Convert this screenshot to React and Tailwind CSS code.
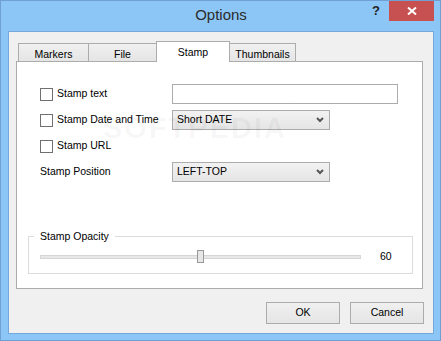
import React from "react";

const tabs = [
  { label: "Markers", w: "w-[71px]" },
  { label: "File", w: "w-[69px]" },
  { label: "Stamp", w: "w-[74px]", active: true },
  { label: "Thumbnails", w: "w-[67px]" },
];

const Checkbox = ({ label }) => (
  <div className="flex items-center w-[132px]">
    <span className="w-[13px] h-[13px] border border-[#707070] bg-white" />
    <span className="ml-[4px]">{label}</span>
  </div>
);

const Chevron = () => (
  <svg width="8" height="6" viewBox="0 0 8 6" className="mr-[5px]">
    <polyline points="1,1 4,4 7,1" fill="none" stroke="#555" strokeWidth="2" />
  </svg>
);

const Select = ({ value }) => (
  <div className="w-[158px] h-[20px] flex items-center justify-between border border-[#acacac] bg-linear-to-b from-[#f2f2f2] to-[#e5e5e5] pl-[4px]">
    <span>{value}</span>
    <Chevron />
  </div>
);

const Button = ({ children }) => (
  <button className="w-[74px] h-[22px] border border-[#acacac] bg-linear-to-b from-[#f0f0f0] to-[#e5e5e5] text-center">
    {children}
  </button>
);

export default function App() {
  return (
    <div className="w-[441px] h-[341px] bg-[#8cc6f7] border border-[#6f9fd3] flex flex-col pl-[7px] pr-[6px] pb-[6px] text-[10.5px] text-black font-['Liberation_Sans',Arial,sans-serif]">
      {/* title bar */}
      <div className="h-[30px] grid grid-cols-[1fr_auto_1fr]">
        <div />
        <div className="flex items-center pb-[2px] text-[15px] text-[#2b2b2b]">Options</div>
        <div className="flex justify-end items-start">
          <span className="w-[26px] h-[20px] flex items-center justify-center font-bold text-[13px] text-[#222] pb-[1px]">?</span>
          <span className="w-[45px] h-[20px] bg-[#c75050] flex items-center justify-center">
            <svg width="10" height="8" viewBox="0 0 10 8">
              <path d="M1 0.5 L9 7.5 M9 0.5 L1 7.5" stroke="#fff" strokeWidth="2" />
            </svg>
          </span>
        </div>
      </div>

      {/* client area */}
      <div className="flex-1 border border-[#76a8dc] bg-[#f0f0f0] flex flex-col pt-[9px] pl-[7px] pr-[10px]">
        <div className="flex items-end h-[20px] ml-[2px]">
          {tabs.map((t, i) =>
            t.active ? (
              <div
                key={t.label}
                className={`${t.w} h-[21px] -mb-px -ml-px relative z-10 border border-b-0 border-[#acacac] bg-white flex justify-center pt-[3px]`}
              >
                {t.label}
              </div>
            ) : (
              <div
                key={t.label}
                className={`${t.w} h-[18px] ${i > 0 ? "-ml-px" : ""} border border-b-0 border-[#acacac] bg-linear-to-b from-[#f0f0f0] to-[#e5e5e5] flex justify-center pt-[3px]`}
              >
                {t.label}
              </div>
            )
          )}
        </div>

        <div className="relative h-[228px] border border-[#acacac] bg-white flex flex-col">
          <div className="flex flex-col gap-[6px] pt-[22px] pl-[23px]">
            <div className="flex items-center h-[20px]">
              <Checkbox label="Stamp text" />
              <div className="w-[226px] h-[20px] border border-[#acacac] bg-white" />
            </div>
            <div className="flex items-center h-[20px]">
              <Checkbox label="Stamp Date and Time" />
              <Select value="Short DATE" />
            </div>
            <div className="flex items-center h-[20px]">
              <Checkbox label="Stamp URL" />
            </div>
            <div className="flex items-center h-[20px]">
              <span className="w-[132px]">Stamp Position</span>
              <Select value="LEFT-TOP" />
            </div>
          </div>

          <fieldset className="mt-auto mb-[14px] ml-[11px] mr-[9px] border border-[#dcdcdc]">
            <legend className="ml-[5px] px-[6px] leading-[13px]">Stamp Opacity</legend>
            <div className="h-[30px] flex items-center pl-[11px] pb-[3px]">
              <div className="relative w-[321px] h-[4px] border border-[#d6d6d6] bg-[#e7e7e7]">
                <span className="absolute left-[156px] top-[-6px] w-[7px] h-[13px] border border-[#999] bg-[#e6e6e6]" />
              </div>
              <span className="ml-[19px]">60</span>
            </div>
          </fieldset>

          <span className="absolute left-[86px] top-[45px] text-[29px] font-bold tracking-[2px] text-black/[0.04] pointer-events-none select-none">
            SOFTPEDIA<sup className="text-[9px] align-top">®</sup>
          </span>
        </div>

        <div className="flex justify-end gap-[10px] mt-[13px] mr-[-1px]">
          <Button>OK</Button>
          <Button>Cancel</Button>
        </div>
      </div>
    </div>
  );
}
